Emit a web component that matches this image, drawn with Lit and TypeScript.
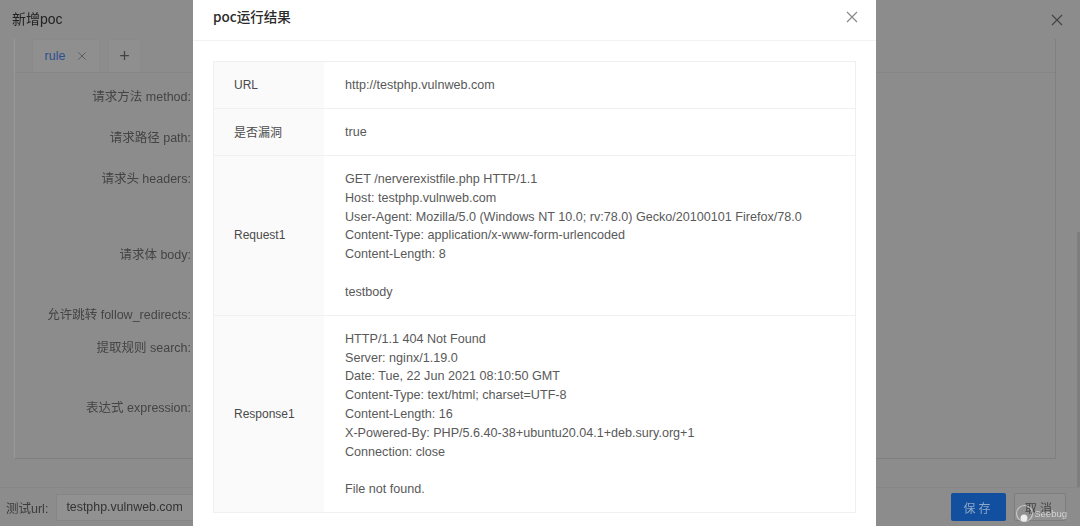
import { LitElement, html, css, svg } from "lit";
import { customElement } from "lit/decorators.js";

const closeIcon = svg`<path d="M2 2 L12 12 M12 2 L2 12" fill="none" stroke="currentColor" stroke-width="1.2"/>`;

// height is the distance to the next label, the fields themselves are hidden by the mask
const formRows = [
  { label: "请求方法 method:", height: 41 },
  { label: "请求路径 path:", height: 41 },
  { label: "请求头 headers:", height: 76 },
  { label: "请求体 body:", height: 60 },
  { label: "允许跳转 follow_redirects:", height: 33 },
  { label: "提取规则 search:", height: 60 },
  { label: "表达式 expression:", height: 41 },
];

const resultRows = [
  { label: "URL", lines: ["http://testphp.vulnweb.com"] },
  { label: "是否漏洞", lines: ["true"] },
  {
    label: "Request1",
    lines: [
      "GET /nerverexistfile.php HTTP/1.1",
      "Host: testphp.vulnweb.com",
      "User-Agent: Mozilla/5.0 (Windows NT 10.0; rv:78.0) Gecko/20100101 Firefox/78.0",
      "Content-Type: application/x-www-form-urlencoded",
      "Content-Length: 8",
      "",
      "testbody",
    ],
  },
  {
    label: "Response1",
    lines: [
      "HTTP/1.1 404 Not Found",
      "Server: nginx/1.19.0",
      "Date: Tue, 22 Jun 2021 08:10:50 GMT",
      "Content-Type: text/html; charset=UTF-8",
      "Content-Length: 16",
      "X-Powered-By: PHP/5.6.40-38+ubuntu20.04.1+deb.sury.org+1",
      "Connection: close",
      "",
      "File not found.",
    ],
  },
];

@customElement("app-root")
export class AppRoot extends LitElement {
  static styles = css`
    :host {
      display: block;
      position: relative;
      width: 1080px;
      height: 526px;
      overflow: hidden;
      background: #8c8c8c;
      font-family: "Liberation Sans", "Noto Sans CJK SC", sans-serif;
      font-size: 12.5px;
      color: #3a3a3a;
    }

    /* page behind the mask */
    .drawer {
      display: flex;
      flex-direction: column;
      height: 526px;
      filter: blur(0.4px);
    }

    .drawer__head {
      display: flex;
      align-items: center;
      justify-content: space-between;
      height: 39px;
      padding: 0 16px 0 12px;
      font-size: 14px;
      color: #222;
    }

    .drawer__title {
      margin-bottom: 3px;
    }

    .drawer__close {
      width: 14px;
      height: 14px;
      color: #444;
    }

    .drawer__body {
      flex: 0 0 419px;
      margin-left: 14px;
      margin-right: 24px;
      border-left: 1px solid #989898;
      border-right: 1px solid #808080;
      border-bottom: 1px solid #7f7f7f;
    }

    .tabs {
      display: flex;
      gap: 8px;
      height: 33px;
      padding-left: 17px;
      border-bottom: 1px solid #868686;
    }

    .tab {
      display: flex;
      align-items: center;
      justify-content: center;
      height: 33px;
      box-sizing: border-box;
      border: 1px solid #8a8a8a;
      border-bottom: none;
      background: #8f8f8f;
    }

    .tab--rule {
      width: 68px;
      gap: 12px;
      color: #2c4f8f;
      border-bottom: 1px solid #8f8f8f;
    }

    .tab--rule svg {
      width: 10px;
      height: 10px;
      color: #555;
    }

    .tab--add {
      width: 33px;
      font-size: 18px;
      color: #444;
    }

    .form {
      display: flex;
      flex-direction: column;
      padding-top: 13px;
    }

    .form__row {
      width: 176px;
      text-align: right;
      color: #444;
      white-space: nowrap;
    }

    .drawer__foot {
      display: flex;
      align-items: center;
      flex: 1;
      margin-top: 28px;
      padding: 0 14px 0 6px;
      border-top: 1px solid #868686;
      color: #3c3c3c;
    }

    .url__input {
      display: flex;
      align-items: center;
      width: 170px;
      height: 27px;
      margin-left: 8px;
      padding-left: 9px;
      box-sizing: border-box;
      border: 1px solid #868686;
      background: #919191;
      font-size: 12.4px;
      color: #333;
    }

    .foot__spacer {
      flex: 1;
    }

    .btn {
      display: flex;
      align-items: center;
      justify-content: center;
      width: 55px;
      height: 28px;
      box-sizing: border-box;
      border-radius: 2px;
      font-size: 12px;
      letter-spacing: 3px;
    }

    .btn--save {
      margin-right: 8px;
      background: #124f9f;
      color: #8fa8c8;
    }

    .btn--cancel {
      width: 52px;
      border: 1px solid #7d7d7d;
      background: #909090;
      color: #444;
    }

    .scrollbar {
      position: absolute;
      top: 232px;
      right: 0;
      width: 3px;
      height: 255px;
      background: #7e7e7e;
    }

    /* result modal, lies over the mask */
    .modal {
      position: absolute;
      top: 0;
      left: 193px;
      width: 683px;
      height: 526px;
      background: #fff;
      font-size: 12.6px;
      color: #595959;
    }

    .modal__head {
      display: flex;
      align-items: center;
      justify-content: space-between;
      height: 41px;
      box-sizing: border-box;
      padding: 0 17px 6px 20px;
      border-bottom: 1px solid #f2f2f2;
      font-family: "Noto Sans CJK SC", sans-serif;
      font-size: 13.5px;
      font-weight: 500;
      color: #2b2b2b;
    }

    .modal__title {
      margin-bottom: 2px;
    }

    .modal__close {
      width: 14px;
      height: 14px;
      color: #888;
    }

    .table {
      margin: 20px 20px 0;
      border: 1px solid #f0f0f0;
    }

    .table__row {
      display: flex;
      border-bottom: 1px solid #f0f0f0;
    }

    .table__row:last-child {
      border-bottom: none;
    }

    .table__label {
      display: flex;
      align-items: center;
      flex: 0 0 110px;
      padding-left: 20px;
      box-sizing: border-box;
      background: #fafafa;
      font-size: 12px;
      color: #4a4a4a;
    }

    .table__value {
      padding: 14px 21px 13.2px;
      line-height: 18.8px;
    }

    .table__line {
      min-height: 18.8px;
      white-space: nowrap;
    }

    /* watermark */
    .mark {
      position: absolute;
      right: 13px;
      bottom: 3px;
      display: flex;
      align-items: center;
      font-size: 9.5px;
      color: rgba(255, 255, 255, 0.6);
    }

    .mark svg {
      width: 19px;
      height: 19px;
    }
  `;

  get _drawer() {
    return html`
      <div class="drawer">
        <div class="drawer__head">
          <span class="drawer__title">新增poc</span>
          <svg class="drawer__close" viewBox="0 0 14 14">${closeIcon}</svg>
        </div>
        <div class="drawer__body">
          <div class="tabs">
            <div class="tab tab--rule">
              <span>rule</span>
              <svg viewBox="0 0 14 14">${closeIcon}</svg>
            </div>
            <div class="tab tab--add">+</div>
          </div>
          <div class="form">
            ${formRows.map(
              (row) => html`
                <div class="form__row" style="height:${row.height}px">${row.label}</div>
              `
            )}
          </div>
        </div>
        <div class="drawer__foot">
          <span>测试url:</span>
          <div class="url__input">testphp.vulnweb.com</div>
          <div class="foot__spacer"></div>
          <div class="btn btn--save">保存</div>
          <div class="btn btn--cancel">取消</div>
        </div>
      </div>
      <div class="scrollbar"></div>
    `;
  }

  get _modal() {
    return html`
      <div class="modal">
        <div class="modal__head">
          <span class="modal__title">poc运行结果</span>
          <svg class="modal__close" viewBox="0 0 14 14">${closeIcon}</svg>
        </div>
        <div class="table">
          ${resultRows.map(
            (row) => html`
              <div class="table__row">
                <div class="table__label">${row.label}</div>
                <div class="table__value">
                  ${row.lines.map((line) => html`<div class="table__line">${line}</div>`)}
                </div>
              </div>
            `
          )}
        </div>
      </div>
    `;
  }

  render() {
    return html`
      ${this._drawer} ${this._modal}
      <div class="mark">
        <svg viewBox="0 0 19 19">
          <circle cx="9.5" cy="9.5" r="8" fill="none" stroke="rgba(255,255,255,.5)" stroke-width="1.2" />
          <circle cx="9" cy="14" r="3.5" fill="rgba(255,255,255,.85)" />
        </svg>
        <span>Seebug</span>
      </div>
    `;
  }
}
